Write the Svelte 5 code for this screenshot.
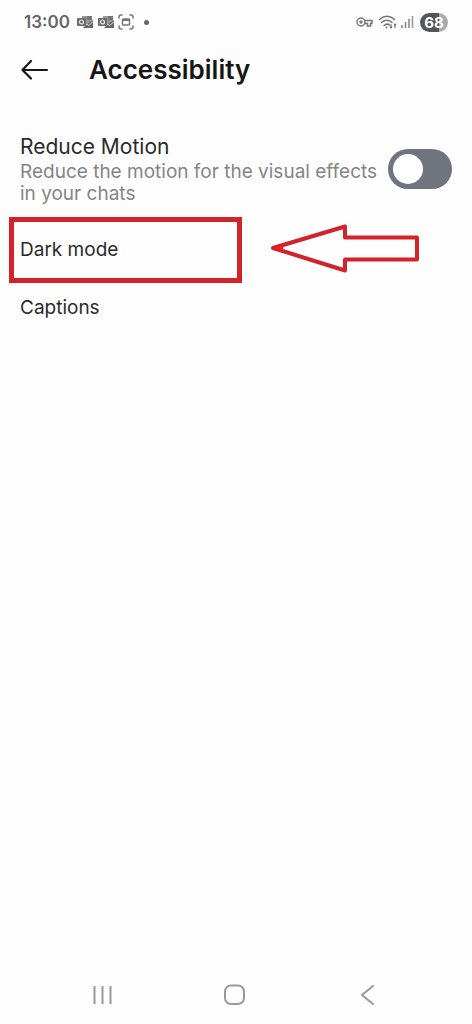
<script>
  let reduceMotion = $state(false);
</script>

<div class="screen">
  <div class="status-bar">
    <div class="status-left">
      <span class="clock">13:00</span>
      <svg width="58" height="18" viewBox="0 0 58 18" aria-hidden="true">
        {#each [0, 21] as x}
          <g transform="translate({x} 0)">
            <path d="M4 3h10v5l-4 3H4z" fill="#999" />
            <path d="M9 3h5v4H9z" fill="#777" />
            <path d="M5 15l4-4 6-4v8z" fill="#666" />
            <path d="M8 11l3 1.500 4-4" fill="none" stroke="#ddd" />
            <rect x="-1" y="5" width="9" height="8" rx="1" fill="#6a6a6a" />
            <circle cx="3.5" cy="9" r="2" fill="none" stroke="#eee" stroke-width="1.2" />
          </g>
        {/each}
        <g fill="none" stroke="#777" stroke-width="1.5" stroke-linecap="round">
          <path d="M44 2h-1q-2 0-2 2v1M52 2h1q2 0 2 2v1M41 13v1q0 2 2 2h1M55 13v1q0 2-2 2h-1" />
          <rect x="44.5" y="6" width="7" height="6" rx="1" />
          <path d="M45 7h6" stroke-width="2" />
        </g>
      </svg>
      <span class="dot"></span>
    </div>
    <div class="status-right">
      <svg width="60" height="18" viewBox="0 0 60 18" aria-hidden="true">
        <g fill="none" stroke="#777" stroke-width="1.5">
          <circle cx="5" cy="9" r="4" />
          <circle cx="5" cy="9" r="1" />
          <path d="M8.5 7.5H16v3h-1.5V13h-3v-2.5h-3" />
        </g>
        <path
          d="M23.500 6.500q7.500-6.500 15 0M25.500 9.500q5.500-4.500 10.500 0M28 12.500q3-2.500 5.500-.5"
          fill="none"
          stroke="#777"
          stroke-width="1.6"
          stroke-linecap="round"
        />
        <circle cx="30.5" cy="14.5" r="1" fill="#777" />
        <path d="M35 11v4M39 11v4" stroke="#666" />
        <path d="M33.500 13.500h3L35 16zM37.500 12.500h3L39 10z" fill="#666" />
        <path d="M46 12v3M49.500 9v6M53 6v9" stroke="#888" stroke-width="1.6" />
        <path d="M56.500 3v12" stroke="#999" stroke-width="1.6" />
      </svg>
      <span class="battery">68</span>
    </div>
  </div>

  <header>
    <button type="button" class="back" aria-label="Back">
      <svg width="28" height="22" viewBox="0 0 28 22" fill="none" stroke="#161616" stroke-width="2.2" stroke-linecap="round" stroke-linejoin="round">
        <path d="M26 12H1.500M10 3L1.500 12l8.500 8.500" />
      </svg>
    </button>
    <h1>Accessibility</h1>
  </header>

  <main>
    <div class="setting">
      <div class="setting-text">
        <label for="reduce-motion">Reduce Motion</label>
        <p id="reduce-motion-hint">Reduce the motion for the visual effects in your chats</p>
      </div>
      <input
        id="reduce-motion"
        type="checkbox"
        role="switch"
        aria-describedby="reduce-motion-hint"
        bind:checked={reduceMotion}
      />
    </div>

    <div class="marked-row">
      <button type="button" class="item marked">Dark mode</button>
      <svg width="150" height="50" viewBox="0 0 150 50" fill="none" stroke="#d2232a" stroke-width="4" stroke-linejoin="round" aria-hidden="true">
        <path d="M3 23L75 1.500v11h72v22H75v11z" />
        <path d="M2 23l11-3v6z" fill="#ee1c24" stroke="none" />
      </svg>
    </div>
    <button type="button" class="item">Captions</button>
  </main>

  <nav aria-label="System">
    <button type="button" aria-label="Recent apps">
      <svg width="24" height="24" viewBox="0 0 24 24" fill="none" stroke="#999" stroke-width="2">
        <path d="M4.500 3v18M12.500 3v18M20.500 3v18" />
      </svg>
    </button>
    <button type="button" aria-label="Home">
      <svg width="24" height="24" viewBox="0 0 24 24" fill="none" stroke="#999" stroke-width="2">
        <rect x="2" y="2.5" width="19" height="18.5" rx="6" />
      </svg>
    </button>
    <button type="button" aria-label="Back">
      <svg width="24" height="24" viewBox="0 0 24 24" fill="none" stroke="#999" stroke-width="2" stroke-linecap="round" stroke-linejoin="round">
        <path d="M17 3L6 12l11 9" />
      </svg>
    </button>
  </nav>
</div>

<style>
  :global(body) {
    background: #fefefe;
  }

  .screen {
    display: flex;
    flex-direction: column;
    min-height: 100vh;
    box-sizing: border-box;
    color: #2a2a2a;
    font-family: Inter, "Liberation Sans", sans-serif;
  }

  button {
    padding: 0;
    border: 0;
    background: none;
    color: inherit;
    font: inherit;
    text-align: left;
    cursor: pointer;
  }

  svg {
    display: block;
    flex: none;
    overflow: visible;
  }

  .status-bar {
    display: flex;
    justify-content: space-between;
    align-items: center;
    height: 44px;
    padding: 0 24px;
    color: #666;
  }

  .status-left,
  .status-right {
    display: flex;
    align-items: center;
    gap: 8px;
  }

  .status-right {
    gap: 4px;
  }

  .clock {
    font-size: 17px;
    font-weight: 600;
  }

  .dot {
    width: 5px;
    height: 5px;
    border-radius: 50%;
    background: #666;
  }

  .battery {
    width: 28px;
    border-radius: 10px;
    background: linear-gradient(90deg, #555 68%, #aaa 68%);
    color: #fff;
    font-size: 15px;
    font-weight: 700;
    line-height: 19px;
    text-align: center;
  }

  header {
    display: flex;
    align-items: center;
    gap: 40px;
    height: 50px;
    padding: 0 21px;
  }

  h1 {
    margin: 0;
    color: #161616;
    font-size: 26px;
    font-weight: 600;
  }

  main {
    flex: 1;
  }

  .setting {
    display: flex;
    justify-content: space-between;
    align-items: center;
    gap: 8px;
    padding: 39px 20px 12px;
  }

  .setting-text {
    flex: 1;
  }

  label {
    display: block;
    font-size: 21px;
    line-height: 28px;
  }

  p {
    margin: 0;
    color: #858585;
    font-size: 19px;
    line-height: 22px;
  }

  input {
    flex: none;
    appearance: none;
    width: 64px;
    height: 40px;
    margin: 0;
    padding: 5px;
    border-radius: 20px;
    background: #70747e;
    cursor: pointer;
  }

  input::before {
    content: "";
    display: block;
    width: 30px;
    height: 30px;
    border-radius: 50%;
    background: #fff;
  }

  input:checked::before {
    margin-left: 24px;
  }

  .marked-row {
    display: flex;
    align-items: center;
    gap: 28px;
    padding: 0 9px;
  }

  .item {
    display: block;
    width: 100%;
    padding: 12px 20px;
    font-size: 19px;
    line-height: 26px;
  }

  .item.marked {
    width: 233px;
    padding: 15px 6px;
    border: 5px solid #d2232a;
  }

  nav {
    display: flex;
    justify-content: space-between;
    padding: 0 92px 17px 90px;
  }
</style>
